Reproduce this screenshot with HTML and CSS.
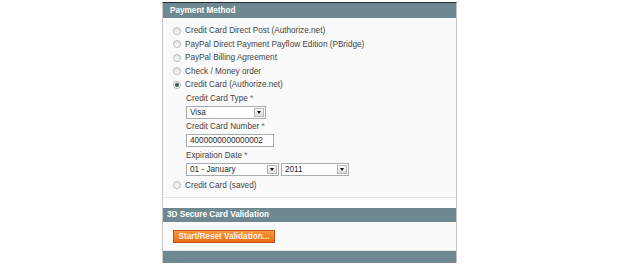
FILE: index.html
```html
<!DOCTYPE html>
<html lang="en">
<head>
    <meta charset="UTF-8">
    <title>Payment Method</title>
    <link rel="stylesheet" href="styles.css">
</head>
<body>
    <div class="panel">
        <div class="head">Payment Method</div>
        <div class="fieldset methods">
            <div class="radio-row"><span class="radio"></span>Credit Card Direct Post (Authorize.net)</div>
            <div class="radio-row"><span class="radio"></span>PayPal Direct Payment Payflow Edition (PBridge)</div>
            <div class="radio-row"><span class="radio"></span>PayPal Billing Agreement</div>
            <div class="radio-row"><span class="radio"></span>Check / Money order</div>
            <div class="radio-row"><span class="radio checked"></span>Credit Card (Authorize.net)</div>

            <div class="cc-form">
                <div class="label">Credit Card Type <span class="req">*</span></div>
                <div class="select w-type"><span class="value">Visa</span><span class="arrow"></span></div>

                <div class="label">Credit Card Number <span class="req">*</span></div>
                <div class="input w-number">4000000000000002</div>

                <div class="label">Expiration Date <span class="req">*</span></div>
                <div class="date-row">
                    <div class="select w-month"><span class="value">01 - January</span><span class="arrow"></span></div>
                    <div class="select w-year"><span class="value">2011</span><span class="arrow"></span></div>
                </div>
            </div>

            <div class="radio-row saved"><span class="radio"></span>Credit Card (saved)</div>
        </div>

        <div class="gap"></div>

        <div class="head head-small">3D Secure Card Validation</div>
        <div class="fieldset validation">
            <button class="btn-orange">Start/Reset Validation...</button>
        </div>
        <div class="head head-bottom"></div>
    </div>
</body>
</html>
```

FILE: styles.css
```css
/* General Styles */
body {
    margin: 0;
    background-color: #ffffff;
    font-family: "Liberation Sans", Arial, sans-serif;
    font-size: 8.2px;
    color: #444444;
}

.panel {
    width: 295px;
    margin: 2px 0 0 162px;
    box-sizing: border-box;
    border-top: 1px solid #2b2b2b;
    border-left: 1px solid #c9c9c9;
    border-right: 1px solid #c2c2c2;
}

.head {
    height: 15px;
    line-height: 15px;
    padding-left: 7px;
    background-color: #6f8992;
    color: #ffffff;
    font-weight: bold;
}

.head-small {
    height: 14px;
    line-height: 14px;
    padding-left: 4px;
}

.head-bottom {
    height: 12px;
}

.fieldset {
    background-color: #fafafa;
    border-bottom: 1px solid #e4e4e4;
}

.methods {
    padding: 6px 0 5px 10px;
}

.radio-row {
    display: flex;
    align-items: center;
    height: 13.5px;
}

.radio {
    width: 6px;
    height: 6px;
    margin-right: 4px;
    border: 1px solid #b8b8b8;
    border-radius: 50%;
    background: linear-gradient(#e4e4e4, #fdfdfd);
    display: flex;
    align-items: center;
    justify-content: center;
}

.radio.checked::after {
    content: "";
    width: 4px;
    height: 4px;
    border-radius: 50%;
    background-color: #3a6446;
}

.saved {
    margin-top: 3px;
}

.cc-form {
    padding-left: 13px;
}

.label {
    height: 14px;
    line-height: 14px;
}

.label .req {
    color: #666666;
}

.select,
.input {
    display: flex;
    align-items: center;
    height: 13px;
    box-sizing: border-box;
    border: 1px solid #a5acb2;
    background-color: #ffffff;
    color: #2a2a2a;
}

.select .value,
.input {
    padding-left: 3px;
}

.select .value {
    flex: 1;
}

.select .arrow {
    width: 10px;
    height: 9px;
    margin-right: 1px;
    box-sizing: border-box;
    border: 1px solid #b7b7b7;
    background: linear-gradient(#fafafa, #dcdcdc);
    display: flex;
    align-items: center;
    justify-content: center;
}

.select .arrow::after {
    content: "";
    border-left: 2.5px solid transparent;
    border-right: 2.5px solid transparent;
    border-top: 3px solid #111111;
}

.w-type {
    width: 80px;
    margin-bottom: 1px;
}

.w-number {
    width: 88px;
    margin-bottom: 2px;
}

.date-row {
    display: flex;
    gap: 2px;
}

.w-month {
    width: 93px;
}

.w-year {
    width: 68px;
}

.gap {
    height: 10px;
    background-color: #ffffff;
}

.validation {
    padding: 8px 0 7px 10px;
}

.btn-orange {
    display: block;
    width: 102px;
    height: 13px;
    padding: 0;
    border: 1px solid #c4551a;
    background: linear-gradient(#f89a3c, #ea6b12);
    color: #fff3ea;
    font-family: "Liberation Sans", Arial, sans-serif;
    font-size: 8.2px;
    font-weight: bold;
    cursor: pointer;
}
```
